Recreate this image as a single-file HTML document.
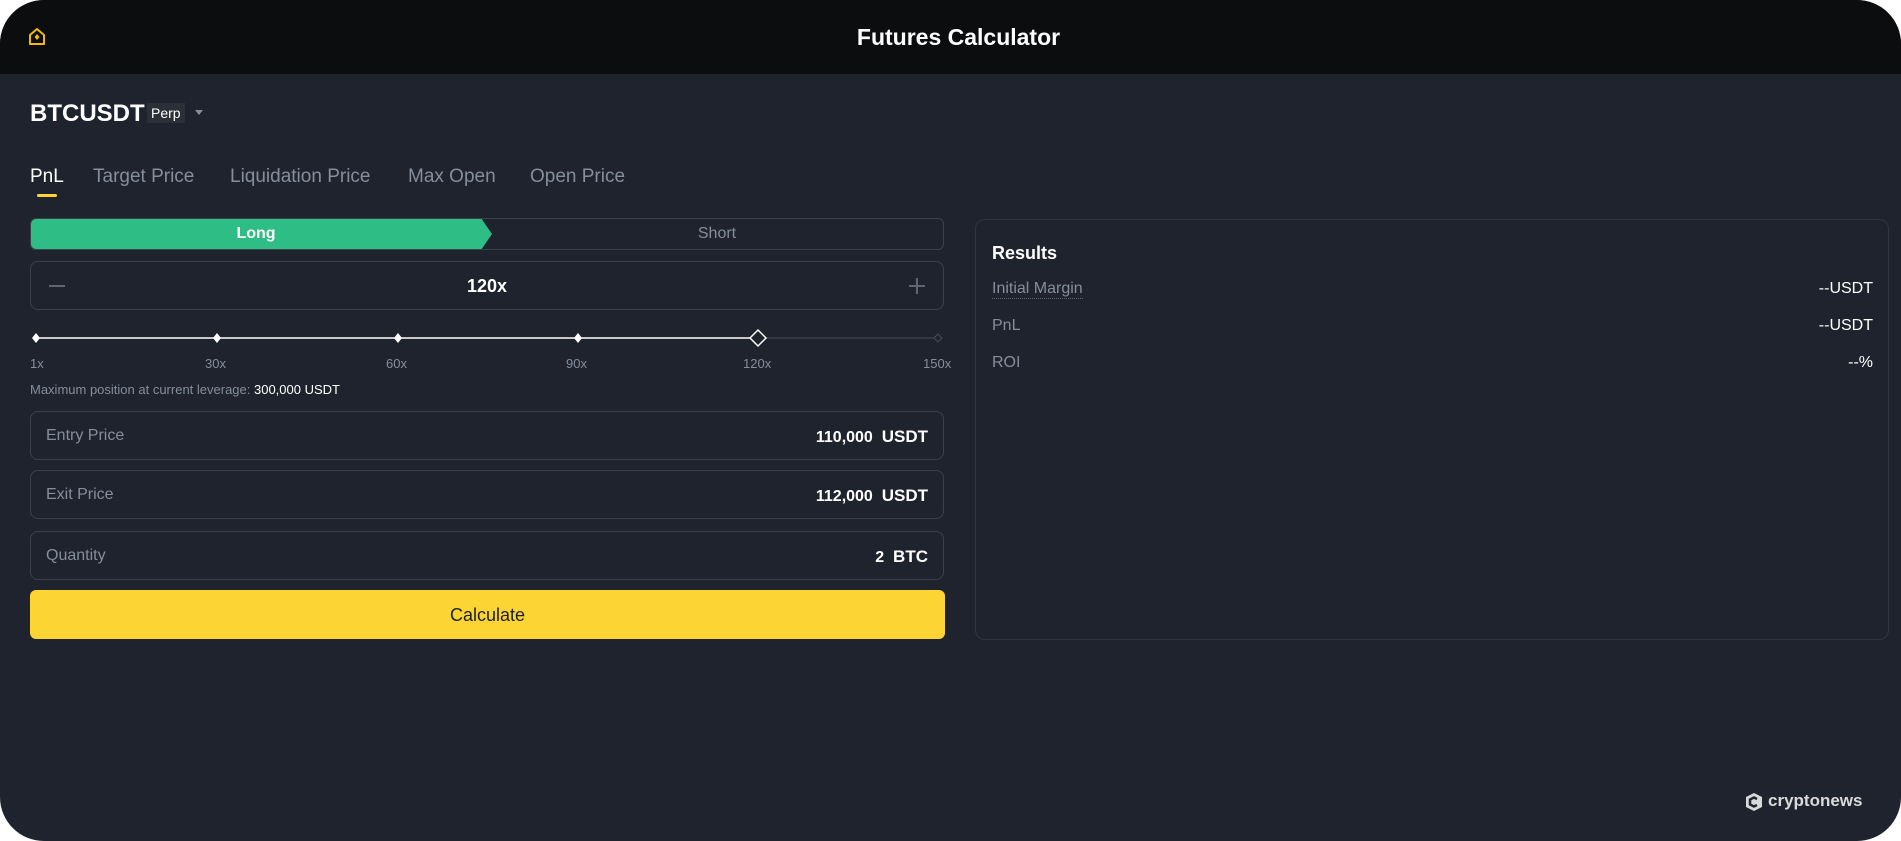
<!DOCTYPE html>
<html><head><meta charset="utf-8"><style>
*{box-sizing:border-box;margin:0;padding:0}
html,body{width:1901px;height:841px;background:#fff;overflow:hidden;font-family:"Liberation Sans",sans-serif}
.app{position:absolute;left:0;top:0;width:1901px;height:841px;background:#1f232d;border-radius:44px;overflow:hidden}
.hdr{position:absolute;left:0;top:0;width:100%;height:74px;background:#0c0d0f}
.title{position:absolute;top:0;left:8px;width:100%;text-align:center;line-height:74px;color:#fff;font-size:23px;font-weight:bold}
.abs{position:absolute}
.box{position:absolute;left:30px;width:914px;border:1px solid #3b404b;border-radius:8px}
.lbl{position:absolute;left:15px;color:#848e9c;font-size:16px}
.val{position:absolute;right:15px;color:#fff;font-size:16px}
.grey{color:#848e9c}
</style></head><body><div class="app">
<div class="hdr">
<svg class="abs" style="left:27px;top:27px" width="20" height="20" viewBox="0 0 20 20"><path d="M3 8 L10 2 L17 8 V17 H3 Z" fill="none" stroke="#f0b90b" stroke-width="2" stroke-linejoin="round"/><path d="M10 7 L12.5 10 L10 13 L7.5 10Z" fill="#f0b90b"/></svg>
<div class="title">Futures Calculator</div>
</div>
<div class="abs" style="left:30px;top:100px;font-size:24px;font-weight:bold;color:#fff">BTCUSDT</div>
<div class="abs" style="left:147px;top:103px;background:#2b2f38;color:#fff;font-size:14px;padding:2px 4px">Perp</div>
<div class="abs" style="left:195px;top:110px;width:0;height:0;border-left:4px solid transparent;border-right:4px solid transparent;border-top:5px solid #848e9c"></div>
<div class="abs" style="top:166px;left:30px;font-size:19px;color:#fff">PnL</div>
<div class="abs" style="top:166px;left:93px;font-size:19px" ><span class="grey">Target Price</span></div>
<div class="abs" style="top:166px;left:230px;font-size:19px"><span class="grey">Liquidation Price</span></div>
<div class="abs" style="top:166px;left:408px;font-size:19px"><span class="grey">Max Open</span></div>
<div class="abs" style="top:166px;left:530px;font-size:19px"><span class="grey">Open Price</span></div>
<div class="abs" style="left:37px;top:194px;width:20px;height:3px;background:#fcd535;border-radius:2px"></div>

<div class="box" style="top:218px;height:32px;border-radius:6px;overflow:hidden">
<svg class="abs" style="left:-1px;top:-1px" width="500" height="32"><path d="M0 0 H451 L462 16 L451 32 H0Z" fill="#2ebd85"/></svg>
<div class="abs" style="left:0;width:450px;text-align:center;line-height:30px;color:#fff;font-size:16px;font-weight:bold">Long</div>
<div class="abs" style="left:460px;right:0;text-align:center;line-height:30px;color:#848e9c;font-size:16px">Short</div>
</div>
<div class="box" style="top:261px;height:49px">
<div class="abs" style="left:18px;top:23px;width:16px;height:2px;background:#5e6673"></div>
<div class="abs" style="width:100%;text-align:center;line-height:49px;color:#fff;font-size:18px;font-weight:bold">120x</div>
<div class="abs" style="right:18px;top:23px;width:16px;height:2px;background:#5e6673"></div>
<div class="abs" style="right:25px;top:16px;width:2px;height:16px;background:#5e6673"></div>
</div>
<svg class="abs" style="left:28px;top:328px" width="922" height="20">
<line x1="8" y1="10" x2="730" y2="10" stroke="#fff" stroke-width="1.5"/>
<line x1="730" y1="10" x2="910" y2="10" stroke="#474d57" stroke-width="1"/>
<g fill="#fff"><path d="M8 5 L12 10 L8 15 L4 10Z"/><path d="M189 5 L193 10 L189 15 L185 10Z"/><path d="M370 5 L374 10 L370 15 L366 10Z"/><path d="M550 5 L554 10 L550 15 L546 10Z"/></g>
<path d="M730 2 L738 10 L730 18 L722 10Z" fill="#1f232d" stroke="#fff" stroke-width="1.5"/>
<path d="M910 6 L914 10 L910 14 L906 10Z" fill="#1f232d" stroke="#474d57"/>
</svg>
<div class="abs grey" style="top:356px;left:30px;font-size:13px">1x</div>
<div class="abs grey" style="top:356px;left:205px;font-size:13px">30x</div>
<div class="abs grey" style="top:356px;left:386px;font-size:13px">60x</div>
<div class="abs grey" style="top:356px;left:566px;font-size:13px">90x</div>
<div class="abs grey" style="top:356px;left:743px;font-size:13px">120x</div>
<div class="abs grey" style="top:356px;left:923px;font-size:13px">150x</div>
<div class="abs" style="top:382px;left:30px;font-size:13px"><span class="grey">Maximum position at current leverage: </span><span style="color:#fff">300,000 USDT</span></div>

<div class="box" style="top:411px;height:49px"><div class="lbl" style="top:15px">Entry Price</div><div class="val" style="top:15px;font-weight:bold">110,000 &nbsp;<span style="font-size:17px">USDT</span></div></div>
<div class="box" style="top:470px;height:49px"><div class="lbl" style="top:15px">Exit Price</div><div class="val" style="top:15px;font-weight:bold">112,000 &nbsp;<span style="font-size:17px">USDT</span></div></div>
<div class="box" style="top:531px;height:49px"><div class="lbl" style="top:15px">Quantity</div><div class="val" style="top:15px;font-weight:bold">2 &nbsp;<span style="font-size:17px">BTC</span></div></div>
<div class="abs" style="left:30px;top:590px;width:915px;height:49px;background:#fcd535;border-radius:6px;text-align:center;line-height:51px;font-size:18px;color:#1e2026">Calculate</div>

<div class="abs" style="left:975px;top:219px;width:914px;height:421px;border:1px solid #303540;border-radius:10px">
<div class="abs" style="left:16px;top:23px;color:#fff;font-size:18px;font-weight:bold">Results</div>
<div class="abs grey" style="left:16px;top:60px;font-size:16px;border-bottom:1px dotted #5e6673">Initial Margin</div>
<div class="abs" style="right:15px;top:60px;font-size:16px;color:#fff">--USDT</div>
<div class="abs grey" style="left:16px;top:97px;font-size:16px">PnL</div>
<div class="abs" style="right:15px;top:97px;font-size:16px;color:#fff">--USDT</div>
<div class="abs grey" style="left:16px;top:134px;font-size:16px">ROI</div>
<div class="abs" style="right:15px;top:134px;font-size:16px;color:#fff">--%</div>
</div>
<svg class="abs" style="left:1744px;top:792px" width="20" height="20" viewBox="0 0 20 20"><path d="M10 1 L18 5 V15 L10 19 L2 15 V5Z" fill="#d9dadc"/><path d="M13 7 L10 5.5 L6 7.5 V12.5 L10 14.5 L13 13" fill="none" stroke="#1f232d" stroke-width="2.5"/></svg>
<div class="abs" style="left:1768px;top:791px;color:#d9dadc;font-size:17px;font-weight:bold">cryptonews</div>
</div></body></html>
